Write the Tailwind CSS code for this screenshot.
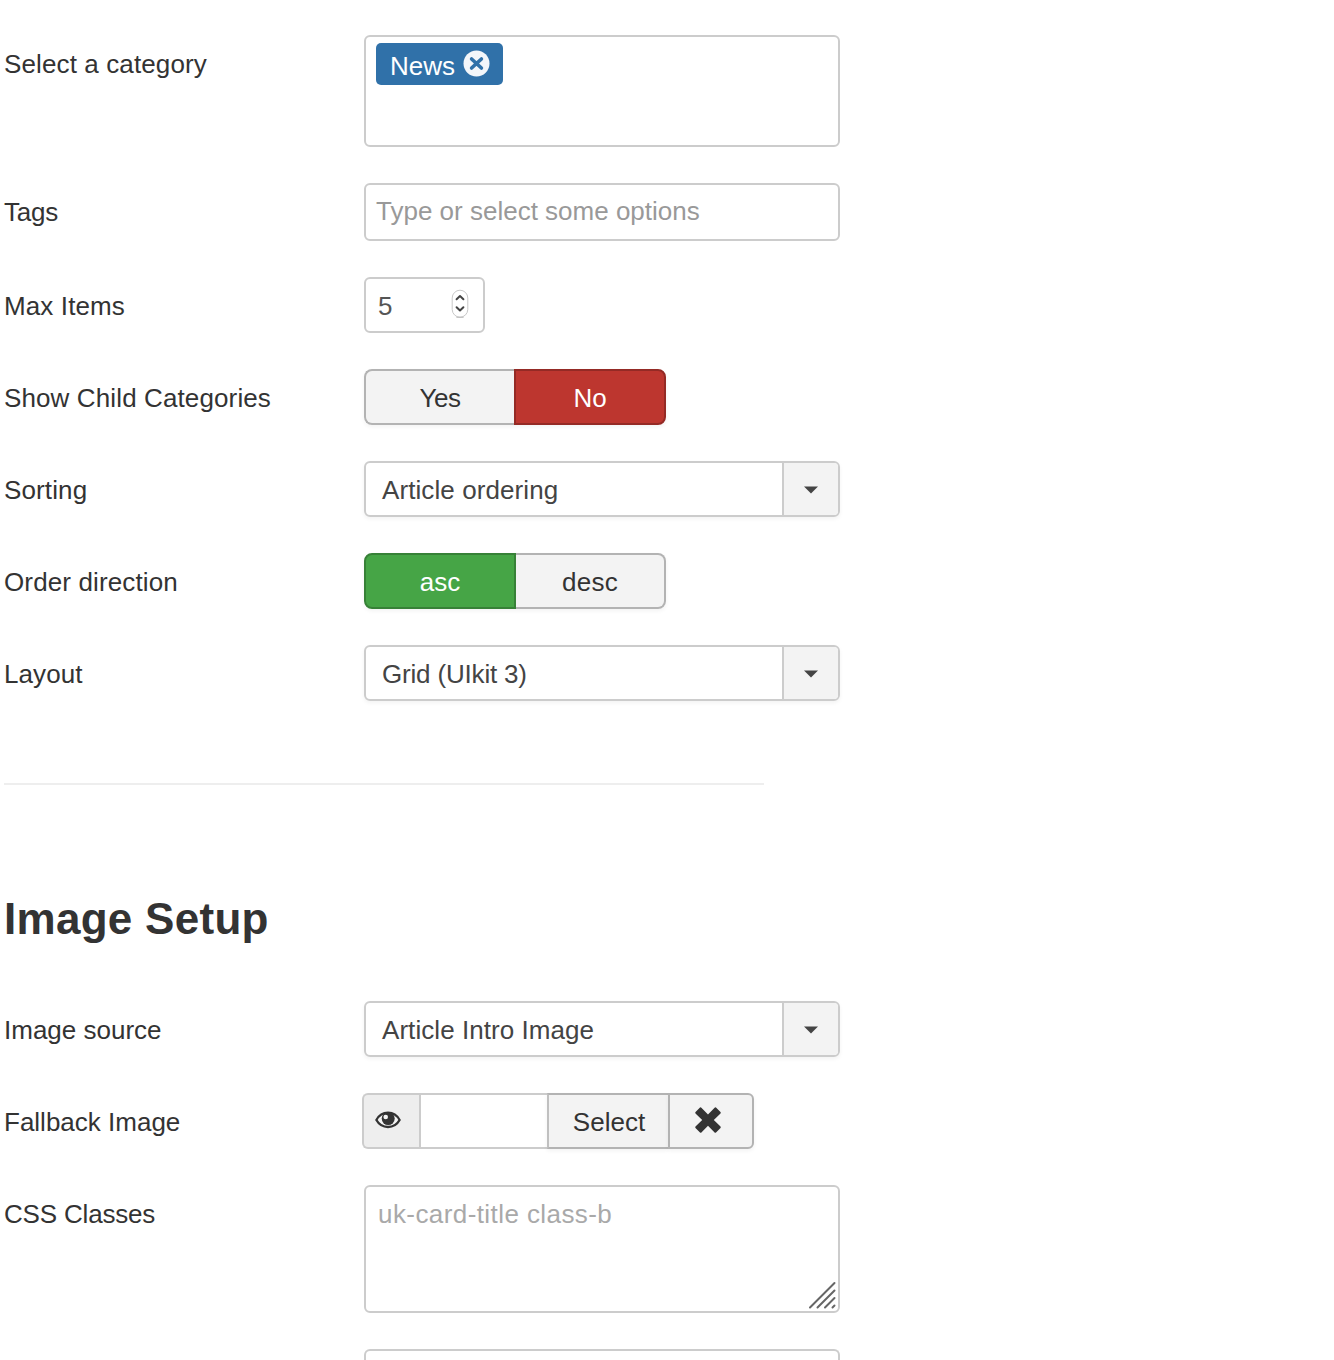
<!DOCTYPE html>
<html lang="en">
<head>
<meta charset="utf-8">
<title>Module options</title>
<script src="https://cdn.jsdelivr.net/npm/@tailwindcss/browser@4"></script>
</head>
<body class="bg-white overflow-hidden h-[1360px] font-['Liberation_Sans',Arial,sans-serif] text-[26px] leading-9 text-[#333]">
<main class="pl-1 pt-[35px]">
  <section class="flex flex-col gap-9">
    <div class="flex h-28">
      <div class="w-[360px] pt-[11px] tracking-[0.12px]"><span>Select a category</span></div>
      <div class="w-[476px] border-2 border-[#ccc] rounded-md pl-2.5 pt-1.5">
        <div class="inline-flex w-[127px] h-[42px] bg-[#3071a9] rounded-[5px] pl-3.5 text-white">
          <span class="pt-[5px] w-[74px]">News</span>
          <svg class="mt-[7px] -ml-px w-[27px] h-[27px] shrink-0" viewBox="0 0 27 27"><circle cx="13.5" cy="13.5" r="13" fill="#f3f6fa"/><path d="M8.6 9l9.800 9M18.400 9l-9.800 9" stroke="#3071a9" stroke-width="3.6" stroke-linecap="round"/></svg>
        </div>
      </div>
    </div>
    <div class="flex h-[58px]">
      <div class="w-[360px] pt-[11px] tracking-[-0.25px]"><span>Tags</span></div>
      <div class="w-[476px] border-2 border-[#ccc] rounded-md pl-2.5 pt-2 text-[#999]"><span>Type or select some options</span></div>
    </div>
    <div class="flex h-14">
      <div class="w-[360px] pt-[11px] tracking-[0.12px]"><span>Max Items</span></div>
      <div class="flex justify-between w-[121px] border-2 border-[#ccc] rounded-md pl-3 pr-3.5 pt-[9px] text-[#555]">
        <span>5</span>
        <svg class="mt-px w-[18px] h-[30px]" viewBox="0 0 18 30"><rect x="1.2" y="1.2" width="15.6" height="27" rx="7.8" fill="#fff" stroke="#c8c8c8"/><path d="M5.4 28.3h7.2" stroke="#bbb"/><path d="M5.6 10.2L9 7l3.4 3.2M5.6 18.2L9 21.4l3.4-3.2" fill="none" stroke="#444" stroke-width="2" stroke-linecap="round" stroke-linejoin="round"/></svg>
      </div>
    </div>
    <div class="flex h-14">
      <div class="w-[360px] pt-[11px] tracking-[0.12px]"><span>Show Child Categories</span></div>
      <div class="flex text-center rounded-lg shadow-[0_2px_4px_rgba(0,0,0,0.05)]">
        <div class="w-[150px] border-2 border-r-0 border-[#b3b3b3] bg-[#f3f3f3] rounded-l-lg pt-[9px] tracking-[-0.4px]">Yes</div>
        <div class="w-[152px] border-2 border-[#942a25] bg-[#bd362f] text-white rounded-r-lg pt-[9px]">No</div>
      </div>
    </div>
    <div class="flex h-14">
      <div class="w-[360px] pt-[11px] tracking-[0.12px]"><span>Sorting</span></div>
      <div class="flex w-[476px] border-2 border-[#ccc] rounded-md overflow-hidden shadow-[0_2px_4px_rgba(0,0,0,0.05)]">
        <span class="flex-1 pl-4 pt-[9px] text-[#444] tracking-[0.09px]">Article ordering</span>
        <span class="w-[56px] bg-[#f3f3f3] border-l-2 border-[#ccc] flex justify-center pt-[23px] pr-px"><svg class="w-[14px] h-2" viewBox="0 0 14 8"><path d="M0 .5h14L7 7.5z" fill="#444"/></svg></span>
      </div>
    </div>
    <div class="flex h-14">
      <div class="w-[360px] pt-[11px] tracking-[0.13px]"><span>Order direction</span></div>
      <div class="flex text-center rounded-lg shadow-[0_2px_4px_rgba(0,0,0,0.05)]">
        <div class="w-[152px] border-2 border-[#378137] bg-[#46a546] text-white rounded-l-lg pt-[9px]">asc</div>
        <div class="w-[150px] border-2 border-l-0 border-[#b3b3b3] bg-[#f3f3f3] rounded-r-lg pt-[9px] tracking-[0.3px]">desc</div>
      </div>
    </div>
    <div class="flex h-14">
      <div class="w-[360px] pt-[11px] tracking-[0.1px]"><span>Layout</span></div>
      <div class="flex w-[476px] border-2 border-[#ccc] rounded-md overflow-hidden shadow-[0_2px_4px_rgba(0,0,0,0.05)]">
        <span class="flex-1 pl-4 pt-[9px] text-[#444] tracking-[-0.18px]">Grid (UIkit 3)</span>
        <span class="w-[56px] bg-[#f3f3f3] border-l-2 border-[#ccc] flex justify-center pt-[23px] pr-px"><svg class="w-[14px] h-2" viewBox="0 0 14 8"><path d="M0 .5h14L7 7.5z" fill="#444"/></svg></span>
      </div>
    </div>
  </section>
  <hr class="mt-[82px] w-[760px] border-0 border-t-2 border-[#eee]">
  <h2 class="mt-[104px] h-[112px] text-[44px] leading-[60px] font-bold tracking-[0.28px]"><span>Image Setup</span></h2>
  <section class="flex flex-col gap-9">
    <div class="flex h-14">
      <div class="w-[360px] pt-[11px]"><span>Image source</span></div>
      <div class="flex w-[476px] border-2 border-[#ccc] rounded-md overflow-hidden shadow-[0_2px_4px_rgba(0,0,0,0.05)]">
        <span class="flex-1 pl-4 pt-[9px] text-[#444] tracking-[0.06px]">Article Intro Image</span>
        <span class="w-[56px] bg-[#f3f3f3] border-l-2 border-[#ccc] flex justify-center pt-[23px] pr-px"><svg class="w-[14px] h-2" viewBox="0 0 14 8"><path d="M0 .5h14L7 7.5z" fill="#444"/></svg></span>
      </div>
    </div>
    <div class="flex h-14">
      <div class="w-[358px] pt-[11px]"><span>Fallback Image</span></div>
      <div class="flex">
        <div class="w-[57px] border-2 border-r-0 border-[#ccc] bg-[#eee] rounded-l-md pl-[11px] pt-4">
          <svg class="w-[26px] h-[18px]" viewBox="0 0 26 18"><path d="M1.400 9C4 4.200 8.200 1.700 13 1.700S22 4.200 24.600 9C22 13.600 17.800 16 13 16S4 13.600 1.400 9z" fill="#f4f4f4" stroke="#333" stroke-width="2.300"/><circle cx="13.200" cy="7.600" r="6.500" fill="#333"/><circle cx="10.700" cy="6" r="2.300" fill="#f4f4f4"/></svg>
        </div>
        <div class="w-[128px] border-2 border-r-0 border-[#ccc] bg-white"></div>
        <div class="w-[121px] border-2 border-r-0 border-[#b3b3b3] border-l-[#c0c0c0] bg-[#f3f3f3] pt-[9px] pl-px text-center shadow-[0_2px_4px_rgba(0,0,0,0.05)]">Select</div>
        <div class="w-[86px] border-2 border-[#b3b3b3] bg-[#f3f3f3] rounded-r-md pl-[23.5px] pt-[11px] shadow-[0_2px_4px_rgba(0,0,0,0.05)]">
          <svg class="w-[28px] h-[28px]" viewBox="0 0 28 28"><path d="M1.500 6L6 1.500Q6.700 1 7.400 1.700L14 8.400l6.600-6.700Q21.300 1 22 1.500L26.500 6q.6.700 0 1.400L19.800 14l6.700 6.600q.6.700 0 1.400L22 26.500q-.7.600-1.400 0L14 19.800l-6.600 6.700q-.7.600-1.400 0L1.500 22q-.6-.7 0-1.400L8.200 14 1.500 7.400Q.9 6.700 1.500 6z" fill="#333"/></svg>
        </div>
      </div>
    </div>
    <div class="flex h-32">
      <div class="w-[360px] pt-[11px] tracking-[-0.18px]"><span>CSS Classes</span></div>
      <div class="relative w-[476px] border-2 border-[#ccc] rounded-md pl-3 pt-[9px] text-[#a9a9a9] tracking-[0.42px]"><span>uk-card-title class-b</span>
        <svg class="absolute right-0.5 bottom-0.5 w-7 h-7" viewBox="0 0 28 28"><path d="M2 26.500L26.500 2M9.500 26.500l17-17M17 26.500l9.500-9.500M24.500 26.500l2-2" fill="none" stroke="#666" stroke-width="2" stroke-linecap="round"/></svg>
      </div>
    </div>
    <div class="flex h-[11px]">
      <div class="w-[360px]"></div>
      <div class="w-[476px] border-2 border-b-0 border-[#ccc] rounded-t-md"></div>
    </div>
  </section>
</main>
</body>
</html>
